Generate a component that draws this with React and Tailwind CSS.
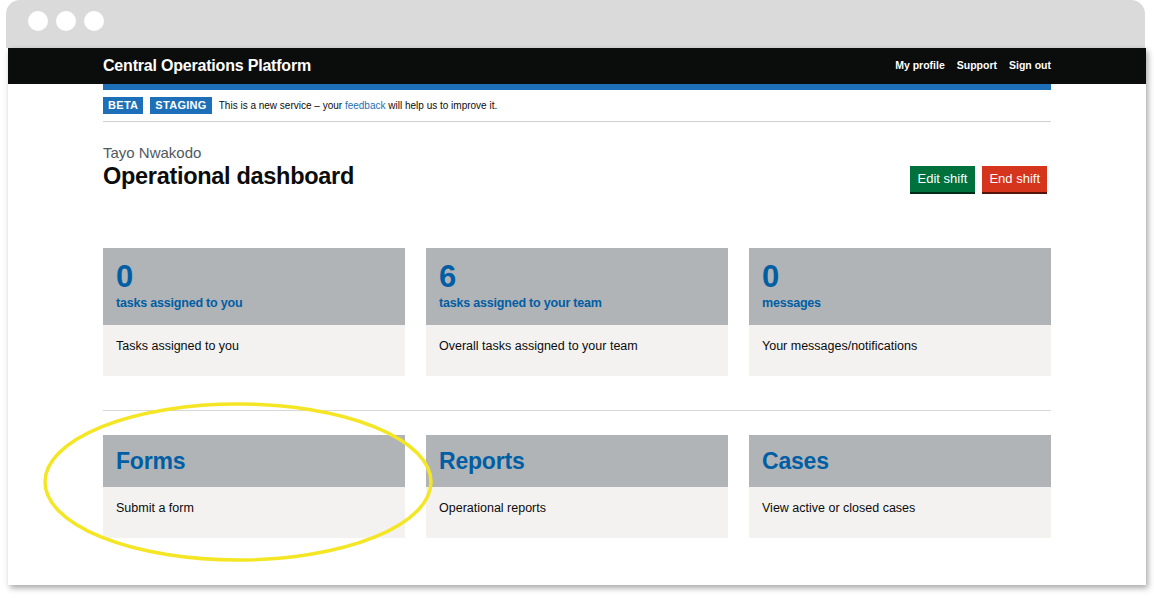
export default function App() {
  const stats = [
    { n: "0", label: "tasks assigned to you", desc: "Tasks assigned to you" },
    { n: "6", label: "tasks assigned to your team", desc: "Overall tasks assigned to your team" },
    { n: "0", label: "messages", desc: "Your messages/notifications" },
  ];
  const links = [
    { t: "Forms", d: "Submit a form" },
    { t: "Reports", d: "Operational reports" },
    { t: "Cases", d: "View active or closed cases" },
  ];
  return (
    <div className="w-[1154px] h-[598px] bg-white relative overflow-hidden font-['Liberation_Sans',Arial,sans-serif]">
      {/* browser frame top */}
      <div className="ml-[6px] w-[1139px] h-[48px] bg-[#dadada] rounded-t-[14px] flex items-center gap-[8px] pl-[22px] pb-[6px]">
        <div className="w-[20px] h-[20px] rounded-full bg-white" />
        <div className="w-[20px] h-[20px] rounded-full bg-white" />
        <div className="w-[20px] h-[20px] rounded-full bg-white" />
      </div>
      {/* window */}
      <div className="ml-[8px] w-[1138px] h-[537px] bg-white shadow-[2px_3px_6px_rgba(0,0,0,0.35)] relative">
        <header className="bg-[#0b0c0c] h-[36px]">
          <div className="mx-[95px] h-full flex items-center justify-between">
            <span className="text-white font-bold text-[16px] tracking-[-0.2px]">Central Operations Platform</span>
            <nav className="flex gap-[12px] text-white font-bold text-[10.5px]">
              <span>My profile</span>
              <span>Support</span>
              <span>Sign out</span>
            </nav>
          </div>
        </header>
        <div className="mx-[95px]">
          <div className="h-[6px] bg-[#1d70b8]" />
          <div className="flex items-center gap-[7px] pt-[7px] pb-[7px] border-b border-[#d0d0d0]">
            <span className="bg-[#1d70b8] text-white font-bold text-[11px] tracking-[0.3px] px-[5px] h-[17px] leading-[17px]">BETA</span>
            <span className="bg-[#1d70b8] text-white font-bold text-[11px] tracking-[0.3px] px-[5px] h-[17px] leading-[17px]">STAGING</span>
            <span className="text-[#0b0c0c] text-[10px]">
              This is a new service – your <span className="text-[#1d70b8]">feedback</span> will help us to improve it.
            </span>
          </div>
          <div className="flex justify-between items-start pt-[22px]">
            <div>
              <div className="text-[#505a5f] text-[15px] leading-[18px]">Tayo Nwakodo</div>
              <h1 className="text-[#0b0c0c] font-bold text-[23.5px] leading-[28px] tracking-[-0.3px]">Operational dashboard</h1>
            </div>
            <div className="flex gap-[7px] mt-[22px] mr-[4px]">
              <button className="bg-[#00703c] text-white text-[13px] h-[26px] px-[8px] shadow-[0_2px_0_#002d18]">Edit shift</button>
              <button className="bg-[#d4351c] text-white text-[13px] h-[26px] px-[7px] shadow-[0_2px_0_#55150b]">End shift</button>
            </div>
          </div>
          <div className="grid grid-cols-3 gap-[21px] mt-[56px]">
            {stats.map((s, i) => (
              <div key={i}>
                <div className="bg-[#b1b4b6] h-[77px] px-[13px] pt-[12px]">
                  <div className="text-[#005ea5] font-bold text-[31px] leading-[34px]">{s.n}</div>
                  <div className="text-[#005ea5] font-bold text-[12.5px] leading-[18px] tracking-[-0.2px]">{s.label}</div>
                </div>
                <div className="bg-[#f3f2f1] h-[51px] px-[13px] pt-[13px] leading-[16px] text-[#0b0c0c] text-[12.5px]">{s.desc}</div>
              </div>
            ))}
          </div>
          <div className="h-px bg-[#d8d8d8] mt-[34px]" />
          <div className="grid grid-cols-3 gap-[21px] mt-[24px]">
            {links.map((s, i) => (
              <div key={i}>
                <div className="bg-[#b1b4b6] h-[52px] px-[13px] flex items-center">
                  <span className="text-[#005ea5] font-bold text-[23px] tracking-[-0.2px]">{s.t}</span>
                </div>
                <div className="bg-[#f3f2f1] h-[51px] px-[13px] pt-[13px] leading-[16px] text-[#0b0c0c] text-[12.5px]">{s.d}</div>
              </div>
            ))}
          </div>
        </div>
      </div>
      {/* highlight ellipse overlay */}
      <svg className="absolute left-0 top-0 pointer-events-none" width="1154" height="598">
        <ellipse cx="238" cy="482" rx="193" ry="78" fill="none" stroke="#f5e625" strokeWidth="3.5" />
      </svg>
    </div>
  );
}
